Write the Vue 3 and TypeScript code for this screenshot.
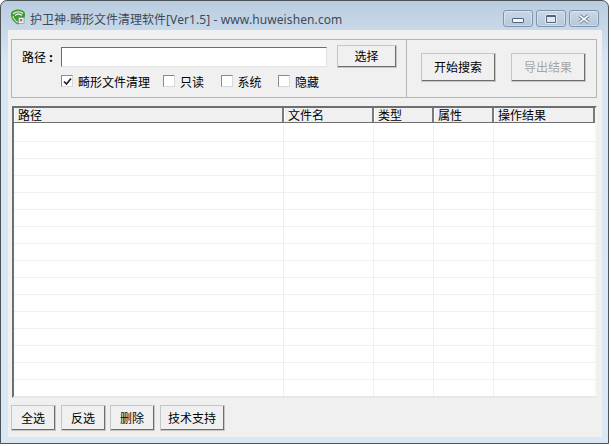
<script setup lang="ts">
const columns: { name: string; width: number }[] = [
  { name: '路径', width: 270 },
  { name: '文件名', width: 90 },
  { name: '类型', width: 60 },
  { name: '属性', width: 60 },
  { name: '操作结果', width: 101 },
]
const attrs: string[] = ['只读', '系统', '隐藏']
const rows: number[] = Array.from({ length: 16 }, (_, i) => i)
const actions: { label: string; width: number }[] = [
  { label: '全选', width: 45 },
  { label: '反选', width: 45 },
  { label: '删除', width: 45 },
  { label: '技术支持', width: 65 },
]
</script>

<template>
  <div class="window">
    <header class="titlebar">
      <svg class="logo" width="16" height="16" viewBox="0 0 16 16">
        <path d="M8 .5 C11 .5 14 2 15 4 C15.500 9 13 13 8 15.500 C3 13 .5 9 1 4 C2 2 5 .5 8 .5Z" fill="#3d9a2e" />
        <path d="M3 5 C5 2.500 10.500 2 13 4.500" fill="none" stroke="#e4f3d4" stroke-width="1.300" />
        <path d="M5 6.500 C7 5 10 5 12 6.500" fill="none" stroke="#f5faec" stroke-width="1.200" />
        <path d="M3 7 C3.500 10 5.500 12 8 13.500" fill="none" stroke="#cfe8b5" stroke-width="1.200" />
        <rect x="8.500" y="8.500" width="5.500" height="6" fill="#eef2f7" stroke="#7f8fb0" stroke-width="0.700" />
        <rect x="9.800" y="10" width="2.400" height="2.400" fill="#d9663a" />
      </svg>
      <span class="title"><span class="title-cjk">护卫神<span class="dot">·</span>畸形文件清理软件</span>[Ver1.5] - www.huweishen.com</span>
      <div class="caption-buttons">
        <div class="cap cap-min"><i></i></div>
        <div class="cap cap-max"><i></i></div>
        <div class="cap cap-close">
          <svg width="14" height="10" viewBox="0 0 14 10">
            <path d="M2.500 1.500 L11.500 8.500 M11.500 1.500 L2.500 8.500" stroke="#5b6b80" stroke-width="3.400" fill="none" />
            <path d="M2.500 1.500 L11.500 8.500 M11.500 1.500 L2.500 8.500" stroke="#f3f6fa" stroke-width="1.600" fill="none" />
          </svg>
        </div>
      </div>
    </header>

    <main class="client">
      <section class="group">
        <div class="search">
          <div class="path-row">
            <label class="path-label">路径<span class="colon">:</span></label>
            <div class="input"></div>
            <button class="btn btn-select">选择</button>
          </div>
          <div class="check-row">
            <span class="check first">
              <span class="box">
                <svg width="9" height="9" viewBox="0 0 9 9">
                  <path d="M1 4.500 L3.500 7 L8 1.500" fill="none" stroke="#222" stroke-width="1.700" />
                </svg>
              </span>
              畸形文件清理
            </span>
            <span v-for="a in attrs" :key="a" class="check">
              <span class="box"></span>{{ a }}
            </span>
          </div>
        </div>
        <div class="actions">
          <button class="btn btn-action">开始搜索</button>
          <button class="btn btn-action disabled">导出结果</button>
        </div>
      </section>

      <section class="table">
        <div class="thead">
          <div v-for="c in columns" :key="c.name" class="th" :style="{ width: c.width + 'px' }">{{ c.name }}</div>
        </div>
        <div class="tbody">
          <div v-for="r in rows" :key="r" class="tr">
            <div v-for="c in columns" :key="c.name" class="td" :style="{ width: c.width + 'px' }"></div>
          </div>
        </div>
      </section>

      <footer class="footer">
        <button v-for="a in actions" :key="a.label" class="btn btn-foot" :style="{ width: a.width + 'px' }">{{ a.label }}</button>
      </footer>
    </main>
  </div>
</template>

<style>
html, body { background: #fff; }
</style>

<style scoped>
.window {
  box-sizing: border-box;
  width: 609px;
  height: 444px;
  border: 1px solid #4c5358;
  border-radius: 7px 7px 0 0;
  background: linear-gradient(180deg, #b9ccdf 0, #c9d9ea 30px, #d8e5f3 60px, #dae7f5 100%);
  padding: 0 6px 6px 7px;
  display: flex;
  flex-direction: column;
  font-family: "Noto Sans CJK SC", "Liberation Sans", sans-serif;
  font-size: 12px;
  color: #000;
}
.titlebar {
  height: 29px;
  flex: none;
  display: flex;
  align-items: center;
  position: relative;
}
.logo { margin: 3px 4px 0 2px; flex: none; }
.title {
  font-family: "Noto Sans", "Noto Sans CJK SC", sans-serif;
  font-size: 12px;
  color: #3f4a56;
  margin-top: 7px;
  letter-spacing: 0.1px;
  white-space: nowrap;
}
.title-cjk {
  font-family: "Noto Sans CJK SC", sans-serif;
  letter-spacing: 0;
}
.dot {
  font-family: "Liberation Sans", sans-serif;
}
.caption-buttons {
  position: absolute;
  right: 3px;
  top: 9px;
  display: flex;
  gap: 3px;
}
.cap {
  box-sizing: border-box;
  height: 17px;
  width: 30px;
  border: 1px solid #7f93ab;
  border-radius: 3px;
  background: linear-gradient(180deg, #c9d8e8, #b5c7da);
  box-shadow: inset 0 0 0 1px rgba(255, 255, 255, 0.35);
  display: flex;
  align-items: center;
  justify-content: center;
}
.cap-min i {
  display: block;
  width: 10px;
  height: 3px;
  margin-top: 4px;
  background: #f2f5f9;
  border: 1px solid #55647a;
  border-radius: 1px;
}
.cap-max i {
  display: block;
  box-sizing: border-box;
  width: 10px;
  height: 8px;
  background: #dfe7f0;
  border: 1px solid #55647a;
  border-top-width: 2px;
  border-radius: 1px;
  box-shadow: 0 0 0 1px rgba(255, 255, 255, 0.6);
}
.client {
  flex: 1;
  min-height: 0;
  background: #f0f0f0;
  padding: 9px 5px 0 3px;
  display: flex;
  flex-direction: column;
  box-sizing: border-box;
}
.group {
  box-sizing: border-box;
  height: 59px;
  flex: none;
  border: 1px solid #b5b5b5;
  display: flex;
}
.search {
  box-sizing: border-box;
  width: 395px;
  flex: none;
  border-right: 1px solid #b5b5b5;
  padding: 5px 0 0 10px;
}
.path-row { display: flex; align-items: center; height: 23px; }
.path-label { width: 39px; flex: none; line-height: 16px; }
.colon { margin-left: 3px; font-weight: 700; }
.input {
  box-sizing: border-box;
  width: 266px;
  height: 20px;
  background: #fff;
  border-top: 1px solid #6c6c6c;
  border-left: 1px solid #6c6c6c;
  border-right: 1px solid #e4e4e4;
  border-bottom: 1px solid #e4e4e4;
}
.btn {
  box-sizing: border-box;
  padding: 0;
  font: inherit;
  color: #000;
  background: #f0f0f0;
  border-style: solid;
  border-width: 1px 2px 2px 1px;
  border-color: #f8f8f8 #6e6e6e #6e6e6e #f8f8f8;
  outline: 1px solid #c6c6c6;
  outline-offset: -1px;
  line-height: 16px;
}
.btn-select { width: 60px; height: 23px; margin-left: 10px; }
.check-row { display: flex; margin-top: 5px; padding-left: 39px; height: 16px; align-items: center; }
.check { display: flex; align-items: center; margin-right: 16.5px; white-space: nowrap; }
.check.first { margin-right: 13px; }
.box {
  box-sizing: border-box;
  width: 12px;
  height: 12px;
  background: #fff;
  border: 1px solid #8a8a8a;
  border-right-color: #d8d8d8;
  border-bottom-color: #d8d8d8;
  margin-right: 5px;
  display: flex;
  align-items: center;
  justify-content: center;
  flex: none;
}
.actions {
  flex: 1;
  display: flex;
  gap: 15px;
  padding: 13px 0 0 14px;
  align-items: flex-start;
}
.btn-action { width: 75px; height: 29px; }
.disabled { color: #a6a6a6; }
.table {
  box-sizing: border-box;
  margin: 8px 0 0 1px;
  width: 585px;
  height: 292px;
  flex: none;
  background: #fff;
  border-style: solid;
  border-width: 2px;
  border-color: #6e6e6e #f4f4f4 #e8e8e8 #6e6e6e;
  overflow: hidden;
}
.thead {
  display: flex;
  height: 15px;
  background: #f0f0f0;
  border-bottom: 1px solid #6e6e6e;
  box-sizing: border-box;
}
.th {
  box-sizing: border-box;
  flex: none;
  height: 14px;
  line-height: 14px;
  padding-left: 4px;
  border-right: 2px solid #7a7a7a;
  box-shadow: inset 1px 0 0 #fff;
}
.tbody { padding-top: 2px; }
.tr {
  display: flex;
  height: 17px;
  box-sizing: border-box;
  border-bottom: 1px solid #efefef;
}
.td {
  box-sizing: border-box;
  flex: none;
  border-right: 1px solid #efefef;
}
.td:last-child { border-right: 0; }
.footer {
  display: flex;
  gap: 5px;
  margin-top: 7px;
}
.btn-foot { height: 26px; flex: none; }
.btn-foot:nth-child(3) { margin-left: -1px; }
</style>
